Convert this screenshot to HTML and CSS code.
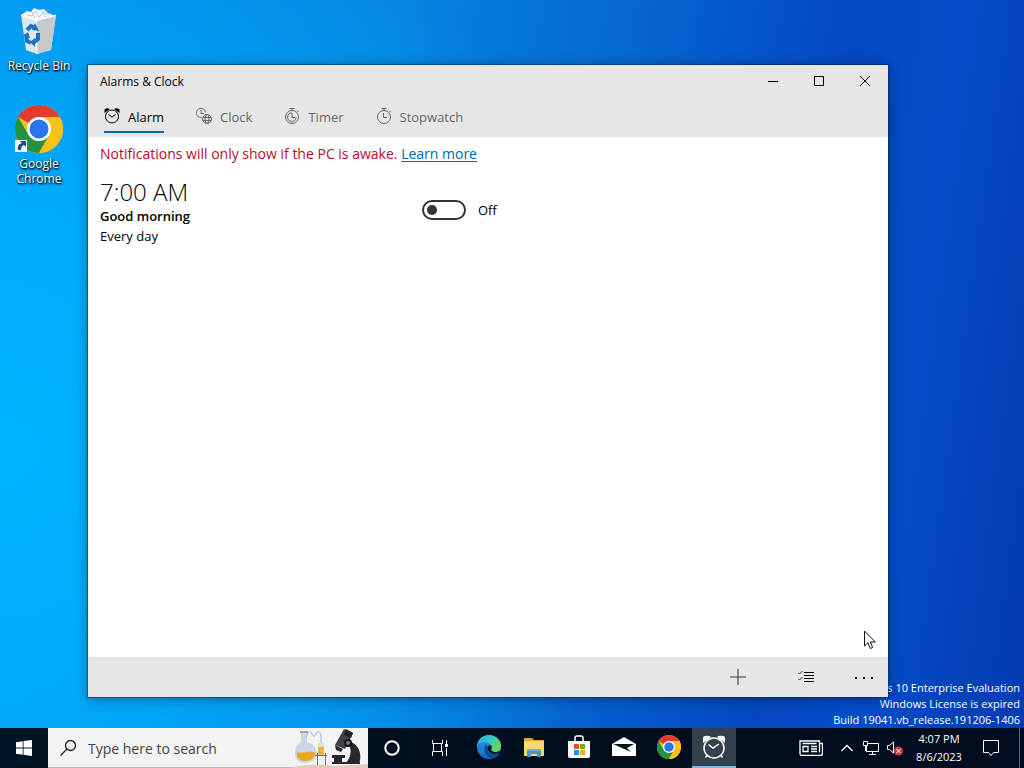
FILE: index.html
```html
<!DOCTYPE html>
<html lang="en">
<head>
    <meta charset="UTF-8">
    <meta name="viewport" content="width=device-width, initial-scale=1.0">
    <title>Alarms &amp; Clock</title>
    <link rel="stylesheet" href="styles.css">
</head>
<body>
    <!-- shared symbols -->
    <svg class="symbols" aria-hidden="true">
        <symbol id="chrome" viewBox="0 0 48 48">
            <circle cx="24" cy="24" r="24" fill="#fbc116"/>
            <path d="M24 24 3.2 12A24 24 0 0 1 44.8 12H24z" fill="#e33b2e"/>
            <path d="M3.2 12A24 24 0 0 0 24 48L34.4 30 24 24 13.6 30z" fill="#229342"/>
            <path d="M24 12h20.8A24 24 0 0 1 24 48l10.4-18z" fill="#fbc116"/>
            <circle cx="24" cy="24" r="12" fill="#fff"/>
            <circle cx="24" cy="24" r="9.5" fill="#2a75ea"/>
        </symbol>
    </svg>

    <main class="desktop">
        <div class="shortcuts">
            <a class="shortcut" href="#">
                <svg class="shortcut-icon" viewBox="0 0 48 48">
                    <path d="M6 8l15 5 20-5-5 35-14 4-11-4z" fill="#e3e6e8"/>
                    <path d="M22 13l19-5-5 35-14 4z" fill="#c6cacd"/>
                    <path d="M6 8l6-4 4 1 3-4 5 2 5-1 4 4 8 3-19 5z" fill="#f4f7f8"/>
                    <path d="M12 8l5 1 3-5 4 6 5-5 5 3M17 5l3 6M27 4l4 6" fill="none" stroke="#bfcbd3"/>
                    <path d="M6 8l15 5 20-5M21 13l1 34" fill="none" stroke="#fff"/>
                    <path d="M12 23l4-4 4 2M11 27l1 7 4 2M23 26v6l-5 4" fill="none" stroke="#1375c8" stroke-width="4"/>
                    <path d="M20 16l4 8-7-1zM8 29l5-4 2 6zM20 31v9l-5-5z" fill="#1375c8"/>
                </svg>
                <span>Recycle Bin</span>
            </a>
            <a class="shortcut" href="#">
                <svg class="shortcut-icon" viewBox="0 0 48 48">
                    <use href="#chrome"/>
                    <path d="M0 35h12v12H0z" fill="#f5f7fa"/>
                    <path d="M3 45c-1-4 1-6 4-7l-2-2h6v6l-2-2c-2 1-3 2-3 5z" fill="#174f91"/>
                </svg>
                <span>Google Chrome</span>
            </a>
        </div>

        <div class="watermark">
            <div>Windows 10 Enterprise Evaluation</div>
            <div>Windows License is expired</div>
            <div>Build 19041.vb_release.191206-1406</div>
        </div>

        <section class="window">
            <header class="titlebar">
                <h1>Alarms &amp; Clock</h1>
                <button class="caption" aria-label="Minimize"><svg viewBox="0 0 10 10"><path d="M0 5.5h10"/></svg></button>
                <button class="caption" aria-label="Maximize"><svg viewBox="0 0 10 10"><path d="M.5.5h9v9h-9z"/></svg></button>
                <button class="caption" aria-label="Close"><svg viewBox="0 0 10 10"><path d="M0 0l10 10M10 0L0 10"/></svg></button>
            </header>

            <nav class="tabs">
                <button class="tab active">
                    <svg viewBox="0 0 16 16">
                        <path d="M.5 5V1.5Q3-.5 6 1zM15.500 5V1.500Q13-.5 10 1z" fill="#000" stroke="none"/>
                        <circle cx="8" cy="8.500" r="6.500"/>
                        <path d="M4.500 6.500L8 9l3.500-2.500"/>
                    </svg>
                    <span>Alarm</span>
                </button>
                <button class="tab">
                    <svg viewBox="0 0 16 16">
                        <path d="M5.5 9.500A4.600 4.600 0 1 1 9.500 4.500M5 2v3.500H8"/>
                        <circle cx="11" cy="11" r="4.500"/>
                        <ellipse cx="11" cy="11" rx="2" ry="4.500"/>
                        <path d="M7 9.500h8M7 12.500h8"/>
                    </svg>
                    <span>Clock</span>
                </button>
                <button class="tab">
                    <svg viewBox="0 0 16 16">
                        <circle cx="8" cy="9" r="6.500"/>
                        <path d="M5.500.5h5M8 .5v2M13 2.500l1.500 1.500M8 5v4.500h3M8 5A4.200 4.200 0 1 0 12 9.500"/>
                    </svg>
                    <span>Timer</span>
                </button>
                <button class="tab">
                    <svg viewBox="0 0 16 16">
                        <circle cx="8" cy="9" r="6.500"/>
                        <path d="M5.500.5h5M8 .5v2M13 2.500l1.500 1.500M7.500 5v4.500H11"/>
                    </svg>
                    <span>Stopwatch</span>
                </button>
            </nav>

            <div class="content">
                <p class="notice">Notifications will only show if the PC is awake. <a href="#">Learn more</a></p>
                <div class="alarm">
                    <div>
                        <div class="alarm-time">7:00 AM</div>
                        <div class="alarm-name">Good morning</div>
                        <div class="alarm-days">Every day</div>
                    </div>
                    <label class="switch">
                        <input type="checkbox">
                        <span>Off</span>
                    </label>
                </div>
            </div>

            <footer class="commands">
                <button aria-label="Add alarm"><svg viewBox="0 0 16 16"><path d="M8 0v16M0 8h16"/></svg></button>
                <button aria-label="Select alarms">
                    <svg viewBox="0 0 16 16"><path d="M6 3.500h10M6 6.500h10M6 9.500h10M6 12.500h10" stroke="#000"/><path d="M0 3.500L1.500 5l3-3M0 9.500L1.500 11l3-3"/></svg>
                </button>
                <button class="more" aria-label="More">
                    <svg viewBox="0 0 18 16"><path d="M0 8h2v2H0zM8 8h2v2H8zM16 8h2v2h-2z" fill="#111" stroke="none"/></svg>
                </button>
            </footer>
        </section>

        <svg class="cursor" viewBox="0 0 12 20">
            <path d="M.5 1v15l3.500-3.300 2.300 5.800 2.400-1-2.400-5.500h5z" fill="#fff" stroke="#111"/>
        </svg>
    </main>

    <footer class="taskbar">
        <button class="start" aria-label="Start">
            <svg width="16" height="16" viewBox="0 0 16 16"><path d="M0 2.200l6.700-1v6.300H0zM7.500 1.100L16 0v7.500H7.500zM0 8.400h6.700v6.400L0 13.800zM7.500 8.400H16V16l-8.500-1.200z" fill="#fff"/></svg>
        </button>
        <label class="search">
            <svg width="16" height="16" viewBox="0 0 16 16"><circle cx="10.500" cy="5.500" r="5" fill="none" stroke="#222" stroke-width="1.300"/><path d="M7 9L.5 15.500" stroke="#222" stroke-width="1.300"/></svg>
            <input type="text" placeholder="Type here to search" aria-label="Search">
            <svg width="76" height="40" viewBox="0 0 76 40">
                <!-- table -->
                <path d="M0 40c8-4 28-4 42-2l34-2v4z" fill="#e5c9bd"/>
                <!-- flask -->
                <path d="M9 4h6v10c6 2 10 6 10 11 0 6-5 10-12 10S3 31 3 25s2-9 6-11z" fill="#cbd6e8"/>
                <path d="M5 24c5 2 13-2 18 1 0 5-4 8-10 8s-9-4-8-9z" fill="#e9a91f"/>
                <path d="M8 4h8" stroke="#98a5bd" stroke-width="2"/>
                <!-- tube and test glass -->
                <path d="M14 10c3-9 5-7 6-4s3 3 4 0 4-4 5 2v9" fill="none" stroke="#a4afd0"/>
                <path d="M26 15h6v12h-6z" fill="#d8dfe9"/>
                <path d="M26 19h6v8h-6z" fill="#efb72c"/>
                <path d="M23 27.500h12M25.500 25v12M33.500 25v12" stroke="#6f7075" fill="none"/>
                <!-- microscope -->
                <path d="M52 1l9 4-8 16-10-4z" fill="#3d4045"/>
                <path d="M54 1l7 4-2 5-7-3z" fill="#202226"/>
                <path d="M43 17l8 4-2 3-5-2z" fill="#25282c"/>
                <path d="M57 13c9 3 14 12 10 23H53c6-6 7-14 4-19z" fill="#25282c"/>
                <path d="M40 27h13v3H40zM42 30h8v4h-8zM40 34h28v2H40z" fill="#25282c"/>
                <circle cx="56" cy="15" r="3" fill="#777c80" stroke="#111" stroke-width="2"/>
            </svg>
        </label>
        <button class="system" aria-label="Cortana">
            <svg width="16" height="16" viewBox="0 0 16 16"><circle cx="8" cy="8" r="6.700" fill="none" stroke="#fff" stroke-width="2"/></svg>
        </button>
        <button class="system" aria-label="Task view">
            <svg width="16" height="16" viewBox="0 0 16 16" fill="none" stroke="#fff"><path d="M.5 0v3.500h10V0M1.500 3.500v8M9.500 3.500v8M.5 16v-4.500h10V16M14.500 0v4M14.500 8v8"/><path d="M13 4h3v3h-3z" fill="#fff" stroke="none"/></svg>
        </button>
        <nav class="apps">
            <button class="app" aria-label="Microsoft Edge">
                <svg viewBox="0 0 24 24">
                    <defs>
                        <linearGradient id="edgeTop" x2="1" y2=".6"><stop stop-color="#2aa9e5"/><stop offset=".5" stop-color="#2fc5cc"/><stop offset="1" stop-color="#65d858"/></linearGradient>
                        <linearGradient id="edgeSide" x2="0" y2="1"><stop stop-color="#249fe6"/><stop offset="1" stop-color="#1269c5"/></linearGradient>
                    </defs>
                    <circle cx="12" cy="12" r="12" fill="url(#edgeSide)"/>
                    <path d="M9 9c-4 6 0 15 8 14 3-1 5-3 6-5-5 3-12 0-12-6z" fill="#124b91"/>
                    <path d="M.3 10C1 4 6 0 12 0c7 0 12 5 12 11 0 4-3 6-6 6-4 0-5-1-4-3C16 8 6 4 .3 10z" fill="url(#edgeTop)"/>
                    <path d="M14 10c2 3-1 4 1 6 2 1.500 5 1.500 8 0v2c-6 2-12 0-12-5 0-2 1-3 3-3z" fill="#06131f"/>
                </svg>
            </button>
            <button class="app" aria-label="File Explorer">
                <svg viewBox="0 0 24 24">
                    <path d="M2 3h8l2 2h10v16H2z" fill="#dda52b"/>
                    <path d="M2 6h20v15H2z" fill="#f8d775"/>
                    <path d="M5 22v-8h14v8h-4v-3H9v3z" fill="#4295d1"/>
                    <path d="M5 14h14v2H5z" fill="#64b0e2"/>
                </svg>
            </button>
            <button class="app" aria-label="Microsoft Store">
                <svg viewBox="0 0 24 24">
                    <path d="M8 6V3q0-2 2-2h4q2 0 2 2v3" fill="none" stroke="#fff" stroke-width="1.500"/>
                    <path d="M1 6h22v15q0 2-2 2H3q-2 0-2-2z" fill="#fff"/>
                    <path d="M7 9h5v5H7z" fill="#e8502b"/><path d="M13 9h5v5h-5z" fill="#76ae1b"/>
                    <path d="M7 15h5v5H7z" fill="#1499dc"/><path d="M13 15h5v5h-5z" fill="#f3af16"/>
                </svg>
            </button>
            <button class="app" aria-label="Mail">
                <svg viewBox="0 0 24 24">
                    <path d="M0 9l12-7 12 7v12H0z" fill="#fff"/>
                    <path d="M1 9h21l-7 4 4 4L1 9z" fill="#06131f"/>
                </svg>
            </button>
            <button class="app" aria-label="Google Chrome"><svg viewBox="0 0 24 24"><use href="#chrome"/></svg></button>
            <button class="app running" aria-label="Alarms &amp; Clock">
                <svg viewBox="0 0 24 24">
                    <path d="M1 8V3q0-2 2-2 4-1 6 1zM23 8V3q0-2-2-2-4-1-6 1z" fill="#fff"/>
                    <circle cx="12" cy="13" r="10" fill="#34404c" stroke="#fff" stroke-width="1.500"/>
                    <path d="M6.500 9.500L11 13l6-4M5 20.500l-1.500 2M19 20.500l1.500 2" fill="none" stroke="#fff" stroke-width="1.500"/>
                </svg>
            </button>
        </nav>

        <div class="tray">
            <button class="news" aria-label="News">
                <svg width="24" height="16" viewBox="0 0 24 16" fill="none" stroke="#fff" stroke-width="1.300"><path d="M20.500 3.500h3v10q0 2-2 2H3q-2 0-2-2V1h19.500v11.500"/><path d="M4 6.500h5v5H4zM3.500 3.500h14M12 6.500h6M12 9h6M12 11.500h6"/></svg>
            </button>
            <button class="tray-icon" aria-label="Show hidden icons">
                <svg width="12" height="8" viewBox="0 0 12 8"><path d="M.5 7L6 1.500 11.500 7" fill="none" stroke="#fff" stroke-width="1.300"/></svg>
            </button>
            <button class="tray-icon" aria-label="Network">
                <svg width="16" height="16" viewBox="0 0 16 16" fill="none" stroke="#fff"><path d="M5 3.500h10.500v8H3.500V6M9.500 11.500v3M6 14.500h7M.5 1.500h4v4h-4zM2.500 6v5"/></svg>
            </button>
            <button class="tray-icon" aria-label="Volume muted">
                <svg width="16" height="16" viewBox="0 0 16 16"><path d="M.5 5.500h2l4-3.500v11l-4-3.500h-2z" fill="none" stroke="#fff"/><circle cx="11.500" cy="11" r="4.500" fill="#d03b3f"/><path d="M9.500 9l4 4M13.500 9l-4 4" stroke="#fff"/></svg>
            </button>
            <button class="clock"><span>4:07 PM</span><span>8/6/2023</span></button>
            <button class="notifications" aria-label="Notifications">
                <svg width="16" height="16" viewBox="0 0 16 16"><path d="M.5.5h15v12h-5L8 15.500 5.500 12.500h-5z" fill="none" stroke="#fff"/></svg>
            </button>
            <button class="show-desktop" aria-label="Show desktop"></button>
        </div>
    </footer>
</body>
</html>
```

FILE: styles.css
```css
* {
    box-sizing: border-box;
}
body {
    display: flex;
    flex-direction: column;
    height: 100vh;
    margin: 0;
    overflow: hidden;
    font-family: "Open Sans", "Noto Sans", sans-serif;
    font-size: 14px;
    color: #000;
}
button {
    display: flex;
    align-items: center;
    justify-content: center;
    padding: 0;
    border: none;
    background: none;
    color: inherit;
    font: inherit;
}
svg {
    flex: none;
}
.symbols {
    position: absolute;
    width: 0;
    height: 0;
}

/* desktop */
.desktop {
    position: relative;
    flex: 1;
    background:
        radial-gradient(ellipse 62% 85% at 0 62%, #00b3ff 0%, rgba(0, 176, 255, 0.9) 35%, rgba(0, 150, 240, 0) 100%),
        linear-gradient(98deg, #0490ea 0%, #0585e2 35%, #0665d2 58%, #0448c0 76%, #044cc8 86%, #0340b8 95%, #033cb2 100%);
}
.shortcuts {
    display: flex;
    flex-direction: column;
    gap: 32px;
    width: 78px;
    padding-top: 7px;
}
.shortcut {
    display: flex;
    flex-direction: column;
    align-items: center;
    gap: 3px;
    color: #fff;
    font-size: 12px;
    line-height: 15px;
    text-align: center;
    text-decoration: none;
    text-shadow: 0 1px 2px #000, 1px 1px 2px #000;
}
.shortcut-icon {
    width: 48px;
    height: 48px;
}
.watermark {
    position: absolute;
    right: 4px;
    bottom: 0;
    color: #fff;
    font-size: 11px;
    line-height: 16px;
    text-align: right;
}
.cursor {
    position: absolute;
    right: 148px;
    bottom: 78px;
    width: 12px;
    height: 20px;
}

/* app window */
.window {
    position: absolute;
    top: 65px;
    right: 136px;
    bottom: 31px;
    left: 88px;
    display: flex;
    flex-direction: column;
    background: #fff;
    box-shadow: 0 0 0 1px rgba(0, 40, 80, 0.5), 0 2px 12px rgba(0, 0, 0, 0.4);
}
.titlebar {
    display: flex;
    height: 32px;
    padding-left: 12px;
    background: #e6e6e6;
}
.titlebar h1 {
    flex: 1;
    margin: 0;
    font-size: 12px;
    font-weight: 400;
    line-height: 33px;
}
.caption {
    width: 46px;
}
.caption svg {
    width: 10px;
    height: 10px;
    fill: none;
    stroke: #000;
}
.tabs {
    display: flex;
    gap: 32px;
    height: 40px;
    padding: 4px 16px;
    background: #e6e6e6;
}
.tab {
    gap: 8px;
    border-bottom: 2px solid transparent;
    color: #666;
    font-size: 13px;
    line-height: 20px;
}
.tab span {
    padding-top: 2px;
}
.tab.active {
    border-color: #0067b0;
    color: #000;
}
.tab svg {
    width: 16px;
    height: 16px;
    fill: none;
    stroke: currentColor;
}
.content {
    flex: 1;
    padding: 7px 12px;
}
.notice {
    margin: 0;
    color: #b40d1e;
    line-height: 20px;
}
.notice a {
    color: #0067b0;
    text-underline-offset: 2px;
}
.alarm {
    display: grid;
    grid-template-columns: 322px auto;
    margin-top: 14px;
}
.alarm-time {
    font-size: 24px;
    font-weight: 300;
    line-height: 28px;
}
.alarm-name {
    font-size: 13px;
    font-weight: 600;
    line-height: 20px;
}
.alarm-days {
    font-size: 13px;
    line-height: 20px;
}
.switch {
    display: flex;
    align-items: center;
    align-self: start;
    gap: 12px;
    margin-top: 22px;
    font-size: 13px;
    line-height: 20px;
}
.switch input {
    display: flex;
    align-items: center;
    appearance: none;
    width: 44px;
    height: 20px;
    margin: 0;
    padding: 0 3px;
    border: 2px solid #333;
    border-radius: 10px;
}
.switch input::before {
    content: "";
    width: 10px;
    height: 10px;
    border-radius: 50%;
    background: #333;
}
.switch input:checked {
    justify-content: flex-end;
}
.commands {
    display: flex;
    justify-content: flex-end;
    height: 40px;
    background: #e6e6e6;
}
.commands button {
    width: 68px;
}
.commands .more {
    width: 48px;
}
.commands svg {
    height: 16px;
    fill: none;
    stroke: #333;
}

/* taskbar */
.taskbar {
    display: flex;
    height: 40px;
    background: linear-gradient(90deg, #001525, #010d1c 60%, #020c20);
    color: #fff;
}
.start,
.system {
    width: 48px;
}
.search {
    display: flex;
    align-items: center;
    width: 320px;
    padding-left: 12px;
    background: #f3f3f3;
    border: solid #bbb;
    border-width: 0 0 1px;
}
.search input {
    flex: 1;
    min-width: 0;
    margin-left: 12px;
    padding: 2px 0 0;
    border: none;
    background: none;
    font: inherit;
}
.search input::placeholder {
    color: #444;
}
.apps {
    display: flex;
    gap: 1px;
    margin-left: 3px;
}
.app {
    width: 44px;
    border-bottom: 2px solid transparent;
}
.app svg {
    width: 24px;
    height: 24px;
}
.app.running {
    background: #34404c;
    border-color: #76b9ed;
}
.tray {
    display: flex;
    margin-left: auto;
}
.news {
    width: 48px;
}
.tray-icon {
    width: 24px;
}
.clock {
    flex-direction: column;
    width: 64px;
    font-size: 11px;
    line-height: 18px;
}
.notifications {
    width: 40px;
}
.show-desktop {
    width: 5px;
    margin-left: 8px;
    border-left: 1px solid #59616c;
}
```
